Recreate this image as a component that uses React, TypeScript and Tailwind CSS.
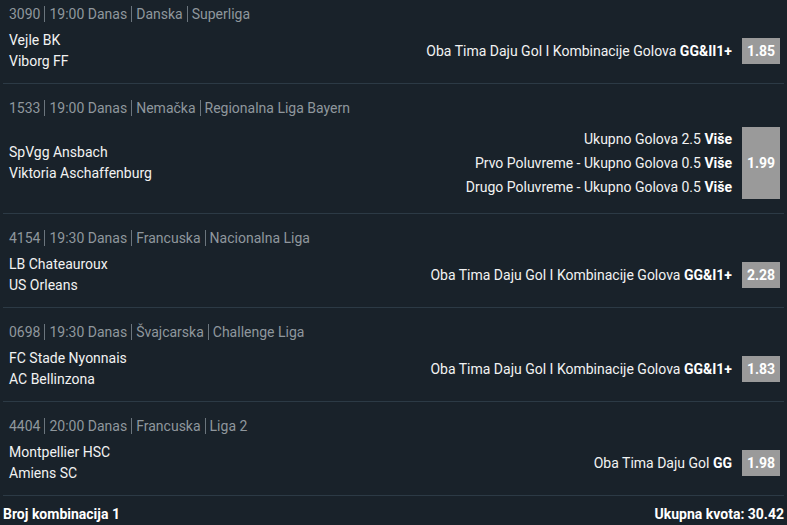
import React from "react"

type Match = {
  id: string
  time: string
  country: string
  league: string
  home: string
  away: string
  picks: { label: string; bold: string }[]
  odd: string
}

const matches: Match[] = [
  {
    id: "3090",
    time: "19:00 Danas",
    country: "Danska",
    league: "Superliga",
    home: "Vejle BK",
    away: "Viborg FF",
    picks: [{ label: "Oba Tima Daju Gol I Kombinacije Golova", bold: "GG&II1+" }],
    odd: "1.85",
  },
  {
    id: "1533",
    time: "19:00 Danas",
    country: "Nemačka",
    league: "Regionalna Liga Bayern",
    home: "SpVgg Ansbach",
    away: "Viktoria Aschaffenburg",
    picks: [
      { label: "Ukupno Golova 2.5", bold: "Više" },
      { label: "Prvo Poluvreme - Ukupno Golova 0.5", bold: "Više" },
      { label: "Drugo Poluvreme - Ukupno Golova 0.5", bold: "Više" },
    ],
    odd: "1.99",
  },
  {
    id: "4154",
    time: "19:30 Danas",
    country: "Francuska",
    league: "Nacionalna Liga",
    home: "LB Chateauroux",
    away: "US Orleans",
    picks: [{ label: "Oba Tima Daju Gol I Kombinacije Golova", bold: "GG&I1+" }],
    odd: "2.28",
  },
  {
    id: "0698",
    time: "19:30 Danas",
    country: "Švajcarska",
    league: "Challenge Liga",
    home: "FC Stade Nyonnais",
    away: "AC Bellinzona",
    picks: [{ label: "Oba Tima Daju Gol I Kombinacije Golova", bold: "GG&I1+" }],
    odd: "1.83",
  },
  {
    id: "4404",
    time: "20:00 Danas",
    country: "Francuska",
    league: "Liga 2",
    home: "Montpellier HSC",
    away: "Amiens SC",
    picks: [{ label: "Oba Tima Daju Gol", bold: "GG" }],
    odd: "1.98",
  },
]

const Sep = () => <span className="inline-block h-4 border-l border-[#6b757d] mx-[4px]" />

const MatchRow = ({ m, first }: { m: Match; first?: boolean }) => (
  <div className={`border-b border-[#2c3a45] pl-[6px] pr-[4px] pb-[11px] ${first ? "pt-[4px]" : "pt-[14px]"}`}>
    <div className="flex items-center h-5 text-[14px] text-[#8f979d]">
      {m.id}
      <Sep />
      {m.time}
      <Sep />
      {m.country}
      <Sep />
      {m.league}
    </div>
    <div className="mt-[6px] flex items-center justify-between">
      <div className="text-[14px] leading-[21px] text-[#f2f2f2]">
        <div>{m.home}</div>
        <div>{m.away}</div>
      </div>
      <div className="flex items-center gap-[10px] py-[3px]">
        <div className="text-right text-[14px] leading-6 text-[#f2f2f2]">
          {m.picks.map((p, i) => (
            <div key={i}>
              {p.label} <b className="font-bold text-white">{p.bold}</b>
            </div>
          ))}
        </div>
        <div className="w-[38px] self-stretch min-h-[26px] bg-[#9a9a9a] flex items-center justify-center text-[14px] font-bold text-white">
          {m.odd}
        </div>
      </div>
    </div>
  </div>
)

export default function App() {
  return (
    <div className="w-[787px] h-[525px] overflow-hidden bg-[#19222a] px-[3px]" style={{ fontFamily: "Roboto, 'Noto Sans', sans-serif" }}>
      {matches.map((m, i) => (
        <MatchRow key={m.id} m={m} first={i === 0} />
      ))}
      <div
        className="flex justify-between pt-[8px] leading-5 text-[14px] font-bold text-white"
        style={{ fontFamily: "'Liberation Sans Narrow', Roboto, sans-serif" }}
      >
        <span>Broj kombinacija 1</span>
        <span>Ukupna kvota: 30.42</span>
      </div>
    </div>
  )
}
